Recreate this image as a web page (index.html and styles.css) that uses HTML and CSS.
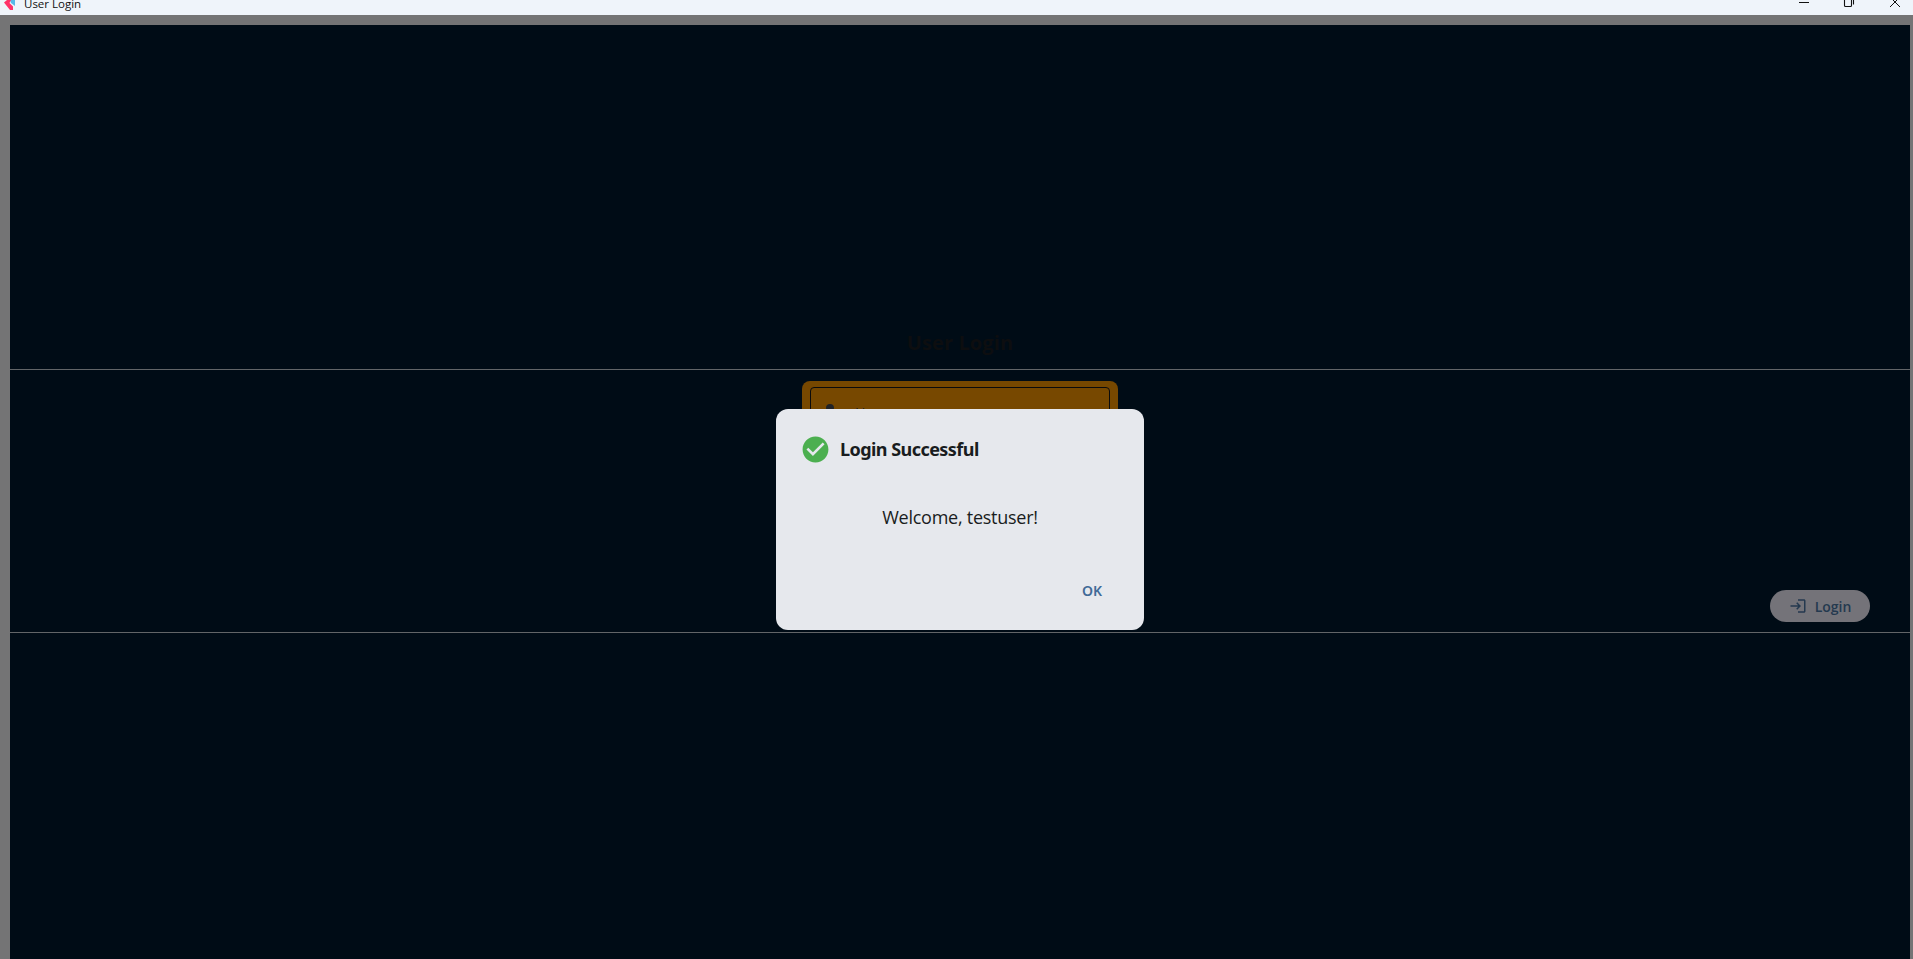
FILE: index.html
```html
<!DOCTYPE html>
<html lang="en">
<head>
<meta charset="utf-8">
<title>User Login</title>
<link rel="stylesheet" href="styles.css">
</head>
<body>
<header class="titlebar">
  <svg class="logo" width="13" height="11" viewBox="0 0 13 11"><path d="M6 0h5v6L7 3z" fill="#55b9e9"/><path d="M0 2.500L3 0h4L5.500 3 9 6.500V10H6z" fill="#ff3268"/></svg>
  <span class="window-title">User Login</span>
  <svg class="controls" width="103" height="8" viewBox="0 0 103 8" fill="none" stroke="#111"><path d="M0 2.500h10"/><path d="M45.500 0v5.500q0 1 1 1h5q1 0 1-1V0M54.500 0v4.500" stroke-width="1.100"/><path d="M91 7L101-3M101 7L91-3"/></svg>
</header>
<main class="page">
  <section class="heading"><h1>User Login</h1></section>
  <section class="form">
    <div class="panel">
      <div class="field">
        <svg width="16" height="16" viewBox="0 0 16 16" fill="#202226"><circle cx="8" cy="4" r="4"/><path d="M0 16v-2c0-5 16-5 16 0v2z"/></svg>
        <span>Username</span>
      </div>
    </div>
    <div class="login">
      <svg width="18" height="18" viewBox="0 0 24 24"><path d="M11 7L9.600 8.400l2.600 2.600H2v2h10.200l-2.600 2.600L11 17l5-5-5-5zm9 12h-8v2h8c1.100 0 2-.9 2-2V5c0-1.100-.9-2-2-2h-8v2h8v14z"/></svg>
      <span>Login</span>
    </div>
  </section>
</main>
<div class="dialog">
  <div class="dialog-head">
    <svg width="31" height="31" viewBox="0 0 24 24"><path fill="#4caf50" d="M12 2C6.480 2 2 6.480 2 12s4.480 10 10 10 10-4.480 10-10S17.520 2 12 2zm-2 15l-5-5 1.410-1.410L10 14.170l7.590-7.590L19 8l-9 9z"/></svg>
    <h2>Login Successful</h2>
  </div>
  <p>Welcome, testuser!</p>
  <div class="actions"><span>OK</span></div>
</div>
</body>
</html>
```
FILE: styles.css
```css
* { box-sizing: border-box; }
html, body { height: 100%; }
body {
  margin: 0;
  display: flex;
  flex-direction: column;
  overflow: hidden;
  position: relative;
  background: #747475;
  font-family: "Noto Sans", "Open Sans", sans-serif;
}
h1, h2, p { margin: 0; }
.titlebar {
  flex: none;
  height: 15px;
  display: flex;
  align-items: flex-start;
  padding: 0 11px 0 4px;
  background: #eff4fa;
}
.window-title {
  margin: -3px auto 0 7px;
  font-family: "Open Sans", sans-serif;
  font-size: 11.500px;
  line-height: 13px;
  color: #111;
}
.page {
  flex: 1;
  margin: 10px 3px 0 10px;
  background: #000c16;
}
.heading {
  height: 345px;
  display: flex;
  align-items: flex-end;
  justify-content: center;
  padding-bottom: 12px;
  border-bottom: 1px solid #626568;
}
h1 {
  font-family: "Open Sans", sans-serif;
  font-size: 20px;
  font-weight: 700;
  line-height: 28px;
  letter-spacing: 0.1px;
  color: #0d0e10;
}
.form {
  height: 263px;
  display: grid;
  grid-template-columns: 1fr 316px 1fr;
  padding: 11px 40px 10px;
  border-bottom: 1px solid #626568;
}
.panel {
  grid-column: 2;
  height: 160px;
  padding: 6px 8px;
  border-radius: 8px;
  background: #774800;
}
.field {
  height: 60px;
  display: flex;
  align-items: flex-start;
  gap: 17px;
  padding: 16px 11px;
  border: 1px solid #0b0b0c;
  border-radius: 4px;
  color: #202226;
  font-size: 14px;
  line-height: 18px;
}
.login {
  grid-column: 3;
  justify-self: end;
  align-self: end;
  width: 100px;
  height: 32px;
  display: flex;
  align-items: center;
  justify-content: center;
  gap: 8px;
  border-radius: 16px;
  background: #747379;
  color: #24394f;
  fill: #24394f;
  font-family: "Open Sans", sans-serif;
  font-size: 14px;
  font-weight: 600;
}
.dialog {
  position: absolute;
  left: 776px;
  top: 409px;
  width: 368px;
  height: 221px;
  padding: 24px;
  border-radius: 12px;
  background: #e6e8ed;
  color: #191c20;
}
.dialog-head {
  height: 32px;
  display: flex;
  align-items: center;
  gap: 9px;
}
h2 {
  font-size: 18px;
  line-height: 28px;
  letter-spacing: -0.55px;
}
.dialog p {
  margin-top: 38px;
  font-family: "Open Sans", sans-serif;
  font-size: 18px;
  font-weight: 400;
  letter-spacing: -0.25px;
  line-height: 28px;
  text-align: center;
}
.actions {
  display: flex;
  justify-content: flex-end;
  margin: 50px 18px 0 0;
  font-size: 14px;
  line-height: 20px;
  font-weight: 600;
  color: #416a97;
}
```
